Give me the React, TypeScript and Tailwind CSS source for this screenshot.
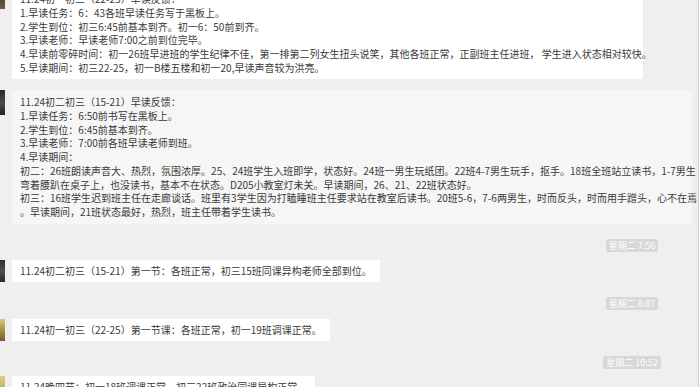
// Chat log screenshot — morning reading feedback messages
const font = { fontFamily: '"Noto Sans CJK SC", "Microsoft YaHei", sans-serif' }

function Avatar({ tone, h }: { tone: string; h: string }) {
  return <div className={`w-[5px] shrink-0 ${h} ${tone}`} />
}

function Bubble({ lines, width, bg, pad }: { lines: string[]; width?: string; bg?: string; pad?: string }) {
  return (
    <div
      className={`ml-[7px] px-[8px] text-[10px] leading-[13.75px] text-[#3a3a3a] ${pad ?? "py-[4px]"} ${bg ?? "bg-white"} ${width ?? ""}`}
    >
      {lines.map((l, i) => (
        <div key={i} className="whitespace-nowrap">
          {l}
        </div>
      ))}
    </div>
  )
}

function Stamp({ text }: { text: string }) {
  return (
    <div className="ml-[572px] flex h-[13px] w-[120px] justify-center">
      <span className="rounded-[2px] bg-[#d8d8d8] px-[3px] text-[9px] leading-[13px] text-white">{text}</span>
    </div>
  )
}

export default function App() {
  return (
    <div className="h-[387px] w-[700px] overflow-hidden bg-[#f7f7f7]" style={font}>
      <div className="flex h-full w-[699px] flex-col border-r border-[#d2d2d2] bg-[#efefef]">
        {/* Message 1 — top cut off */}
        <div className="-mt-[12px] flex items-start">
          <Avatar tone="bg-gradient-to-b from-[#3a332c] to-[#6b5a48]" h="h-[21px]" />
          <Bubble
            width="w-[631px]"
            lines={[
              "11.24初一初三（22-25）早读反馈：",
              "1.早读任务：6：43各班早读任务写于黑板上。",
              "2.学生到位：初三6:45前基本到齐。初一6：50前到齐。",
              "3.早读老师：早读老师7:00之前到位完毕。",
              "4.早读前零碎时间：初一26班早进班的学生纪律不佳，第一排第二列女生扭头说笑，其他各班正常，正副班主任进班， 学生进入状态相对较快。",
              "5.早读期间：初三22-25，初一B楼五楼和初一20,早读声音较为洪亮。",
            ]}
          />
        </div>

        {/* Message 2 */}
        <div className="mt-[11px] flex items-start">
          <Avatar tone="bg-gradient-to-b from-[#2a2a2a] via-[#4a4a4a] to-[#222]" h="h-[25px]" />
          <Bubble
            width="w-[680px]"
            bg="bg-[#f6f6f6]"
            pad="py-[5.5px]"
            lines={[
              "11.24初二初三（15-21）早读反馈：",
              "1.早读任务：6:50前书写在黑板上。",
              "2.学生到位：6:45前基本到齐。",
              "3.早读老师：7:00前各班早读老师到班。",
              "4.早读期间：",
              "初二：26班朗读声音大、热烈，氛围浓厚。25、24班学生入班即学，状态好。24班一男生玩纸团。22班4-7男生玩手，抠手。18班全班站立读书，1-7男生",
              "弯着腰趴在桌子上，也没读书，基本不在状态。D205小教室灯未关。早读期间，26、21、22班状态好。",
              "初三：16班学生迟到班主任在走廊谈话。班里有3学生因为打瞌睡班主任要求站在教室后读书。20班5-6，7-6两男生，时而反头，时而用手蹭头，心不在焉",
              "。早读期间，21班状态最好，热烈，班主任带着学生读书。",
            ]}
          />
        </div>

        <div className="mt-[15px]">
          <Stamp text="星期二 7:56" />
        </div>

        {/* Message 3 */}
        <div className="mt-[8px] flex items-start">
          <Avatar tone="bg-gradient-to-b from-[#2c2c2c] via-[#505048] to-[#2a2a2a]" h="h-[22px]" />
          <Bubble lines={["11.24初二初三（15-21）第一节：各班正常，初三15班同课异构老师全部到位。"]} />
        </div>

        <div className="mt-[15px]">
          <Stamp text="星期二 8:07" />
        </div>

        {/* Message 4 */}
        <div className="mt-[9px] flex items-start">
          <Avatar tone="bg-gradient-to-b from-[#d8c77e] via-[#a89045] to-[#6e5e30]" h="h-[22px]" />
          <Bubble lines={["11.24初一初三（22-25）第一节课：各班正常，初一19班调课正常。"]} />
        </div>

        <div className="mt-[15px]">
          <Stamp text="星期二 10:52" />
        </div>

        {/* Message 5 — bottom cut off */}
        <div className="mt-[7px] flex items-start">
          <Avatar tone="bg-gradient-to-b from-[#e0cf86] to-[#b39a4c]" h="h-[22px]" />
          <Bubble lines={["11.24晚四节：初一18班调课正常，初三22班政治同课异构正常。"]} />
        </div>
      </div>
    </div>
  )
}
